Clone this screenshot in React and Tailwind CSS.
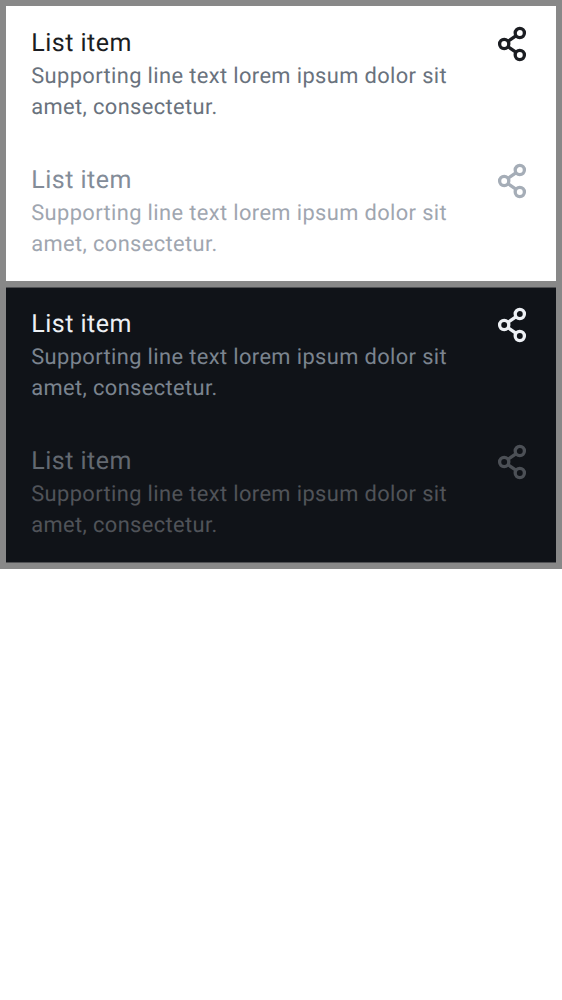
function ShareIcon() {
  return (
    <svg className="h-[38px] w-[38px] shrink-0" viewBox="0 0 38 38" fill="none" stroke="currentColor" strokeWidth="3.3">
      <circle cx="26.8" cy="8" r="4.6" />
      <circle cx="11.2" cy="19" r="4.6" />
      <circle cx="26.8" cy="30" r="4.6" />
      <path d="M14.8 16.5 L23.2 10.6 M14.8 21.5 L23.2 27.4" />
    </svg>
  );
}

function ListItem({ title, support, icon }) {
  return (
    <div className="flex h-[137.5px] items-start justify-between px-[25px] pt-[18.5px]">
      <div className="mt-[2px] w-[440px] pl-[0.2px] [text-rendering:geometricPrecision]">
        <div className={"text-[25px] leading-[34px] tracking-[0.5px] " + title}>List item</div>
        <div className={"text-[21.875px] leading-[31.25px] tracking-[0.38px] " + support}>
          Supporting line text lorem ipsum dolor sit
          <br />
          amet, consectetur.
        </div>
      </div>
      <div className={icon}>
        <ShareIcon />
      </div>
    </div>
  );
}

export default function App() {
  return (
    <div className="flex h-[569px] w-[562px] flex-col gap-[6px] bg-[#888888] p-[6px] font-['Roboto',sans-serif]">
      <section className="h-[275px] bg-white">
        <ListItem title="text-[#1b1d22]" support="text-[#69727d]" icon="text-[#1b1d22]" />
        <ListItem title="text-[#838c98]" support="text-[#9fa6b0]" icon="text-[#a5adb7]" />
      </section>
      <section className="h-[276px] border-y border-[#505154] bg-[#101318]">
        <div className="-mt-px">
          <ListItem title="text-[#edf0f4]" support="text-[#7b848f]" icon="text-[#edf0f4]" />
          <ListItem title="text-[#636971]" support="text-[#505359]" icon="text-[#4c5056]" />
        </div>
      </section>
    </div>
  );
}
